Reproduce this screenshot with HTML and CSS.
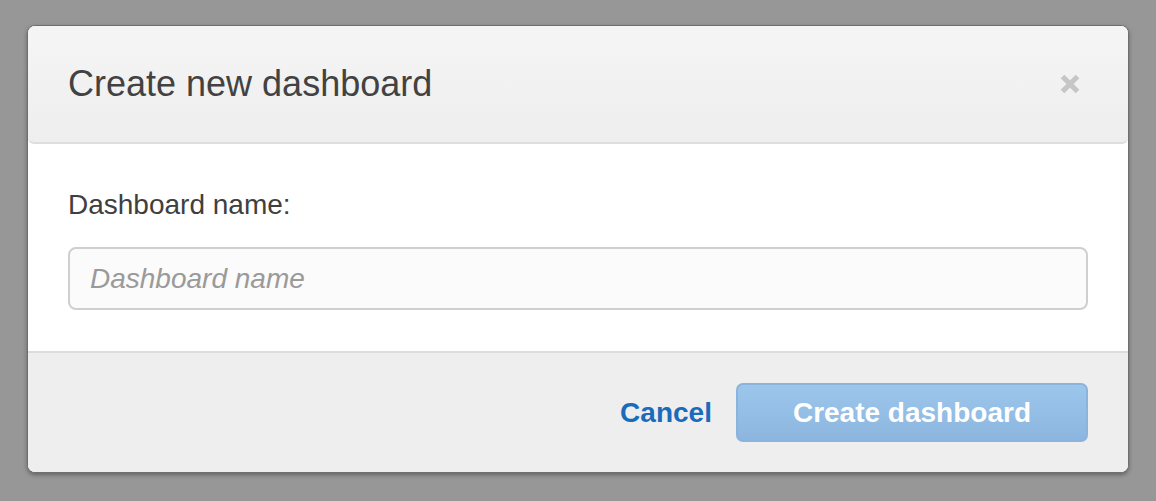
FILE: index.html
```html
<!DOCTYPE html>
<html>
<head>
<meta charset="utf-8">
<link rel="stylesheet" href="styles.css">
</head>
<body>
<div class="page">
  <div class="modal">
    <div class="modal-header">
      <h1 class="title">Create new dashboard</h1>
      <button class="close" aria-label="Close">
        <svg width="20" height="20" viewBox="0 0 20 20"><path d="M2.5 2.5 L17.5 17.5 M17.5 2.5 L2.5 17.5" stroke="#c6c6c6" stroke-width="5.2" fill="none"/></svg>
      </button>
    </div>
    <div class="modal-body">
      <label class="label" for="dn">Dashboard name:</label>
      <input id="dn" class="input" type="text" placeholder="Dashboard name">
    </div>
    <div class="modal-footer">
      <a class="cancel" href="#">Cancel</a>
      <button class="primary">Create dashboard</button>
    </div>
  </div>
</div>
</body>
</html>
```

FILE: styles.css
```css
html, body {
  margin: 0;
  padding: 0;
  background: #979797;
  height: 100%;
}
body {
  font-family: "Liberation Sans", Arial, Helvetica, sans-serif;
}
.page {
  padding: 25px 27px 0 27px;
  display: flex;
  flex-direction: column;
}
.modal {
  background: #fff;
  border: 1px solid #6f6f6f;
  border-radius: 8px;
  box-shadow: 0 2px 4px rgba(0, 0, 0, 0.35);
  overflow: hidden;
  display: flex;
  flex-direction: column;
}
.modal-header {
  height: 118px;
  box-sizing: border-box;
  display: flex;
  align-items: center;
  justify-content: space-between;
  padding: 0 48px 0 40px;
  background: linear-gradient(#f5f5f5, #eeeeee);
  border-bottom: 2px solid #dedede;
  border-radius: 0 0 6px 6px;
}
.title {
  margin: 0;
  font-size: 36px;
  font-weight: normal;
  color: #424242;
  line-height: 40px;
}
.close {
  border: 0;
  background: none;
  padding: 0;
  width: 20px;
  height: 20px;
  display: flex;
}
.modal-body {
  padding: 41px 40px 41px 40px;
  display: flex;
  flex-direction: column;
}
.label {
  font-size: 28px;
  line-height: 40px;
  color: #3f3f3f;
  margin-bottom: 22px;
}
.input {
  height: 63px;
  box-sizing: border-box;
  border: 2px solid #cfcfcf;
  border-radius: 8px;
  background: #fbfbfb;
  padding: 0 20px;
  font-family: "Liberation Sans", Arial, sans-serif;
  font-size: 28px;
  margin: 0;
}
.input::placeholder {
  color: #9a9a9a;
  font-style: italic;
}
.modal-footer {
  height: 121px;
  box-sizing: border-box;
  border-top: 2px solid #dcdcdc;
  background: #eeeeee;
  display: flex;
  align-items: center;
  justify-content: flex-end;
  gap: 24px;
  padding: 0 40px;
}
.cancel {
  font-size: 28px;
  font-weight: bold;
  color: #1b6bbd;
  text-decoration: none;
}
.primary {
  height: 59px;
  box-sizing: border-box;
  padding: 0 55px;
  border: 2px solid #8ab4dd;
  border-radius: 7px;
  background: linear-gradient(#9dc6ec, #8cb6df);
  color: #fff;
  font-family: "Liberation Sans", Arial, sans-serif;
  font-size: 28px;
  font-weight: bold;
}
```
